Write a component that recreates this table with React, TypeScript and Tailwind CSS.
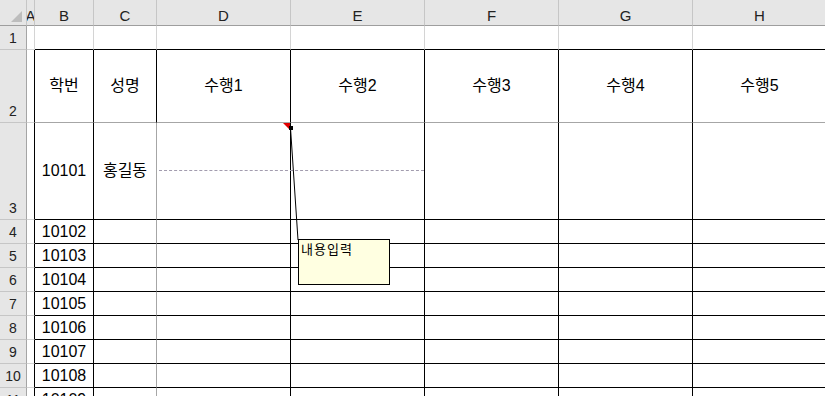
import clsx from 'clsx';

// 엑셀 시트 화면 (수행평가 입력표)
const cols = [
  { key: '#', w: 'w-[27px]' },
  { key: 'A', w: 'w-[8px]' },
  { key: 'B', w: 'w-[59px]' },
  { key: 'C', w: 'w-[63px]' },
  { key: 'D', w: 'w-[134px]' },
  { key: 'E', w: 'w-[134px]' },
  { key: 'F', w: 'w-[134px]' },
  { key: 'G', w: 'w-[134px]' },
  { key: 'H', w: 'w-[134px]' },
];

type Row = { n: number; h: string; data: Record<string, string> };

const rows: Row[] = [
  { n: 1, h: 'h-[24px]', data: {} },
  {
    n: 2,
    h: 'h-[73px]',
    data: { B: '학번', C: '성명', D: '수행1', E: '수행2', F: '수행3', G: '수행4', H: '수행5' },
  },
  { n: 3, h: 'h-[97px]', data: { B: '10101', C: '홍길동' } },
  ...[10102, 10103, 10104, 10105, 10106, 10107, 10108, 10109].map((id, i) => ({
    n: i + 4,
    h: 'h-[24px]',
    data: { B: String(id) },
  })),
];

const grid = 'border-[#d4d4d4]';

const cellBorders = (row: number, col: string) => {
  if (col === 'A') return row === 1 ? 'border-r-[#d4d4d4] border-b-[#d4d4d4]' : 'border-r-black border-b-[#d4d4d4]';
  if (row === 1) return 'border-r-[#d4d4d4] border-b-black';
  if (row === 2) return 'border-r-black border-b-[#a6a6a6]';
  if (col === 'C') return 'border-r-[#a6a6a6] border-b-black';
  return 'border-r-black border-b-black';
};

const ColumnHeader = () => (
  <div className="flex h-[26px]">
    {cols.map((c) =>
      c.key === '#' ? (
        <div
          key={c.key}
          className={clsx(c.w, 'shrink-0 border-r border-b border-r-[#c6c6c6] border-b-[#9e9e9e] bg-[#e6e6e6] relative')}
        >
          <svg className="absolute left-0 top-0" width="26" height="25">
            <polygon points="11,22 22,22 22,11" fill="#bdbdbd" />
          </svg>
        </div>
      ) : (
        <div
          key={c.key}
          className={clsx(
            c.w,
            'shrink-0 border-r border-b border-r-[#c6c6c6] border-b-[#9e9e9e] bg-[#e6e6e6] flex justify-center pt-[7px] text-[15px] leading-[18px] text-[#222] overflow-hidden'
          )}
        >
          {c.key}
        </div>
      )
    )}
  </div>
);

const SheetRow = ({ row }: { row: Row }) => (
  <div className={clsx('flex', row.h)}>
    {cols.map((c) =>
      c.key === '#' ? (
        <div
          key={c.key}
          className={clsx(
            c.w,
            'shrink-0 border-r border-b border-r-[#a5a5a5] border-b-[#c6c6c6] bg-[#e6e6e6] flex items-end justify-center pb-[2px] text-[14px] leading-[18px] text-[#222]'
          )}
        >
          {row.n}
        </div>
      ) : (
        <div
          key={c.key}
          className={clsx(
            c.w,
            grid,
            cellBorders(row.n, c.key),
            'shrink-0 border-r border-b bg-white flex items-center justify-center text-[16px] leading-[20px] text-black whitespace-nowrap'
          )}
        >
          {row.data[c.key] ?? ''}
        </div>
      )
    )}
  </div>
);

export default function App() {
  return (
    <div className="relative w-[825px] h-[396px] overflow-hidden bg-white font-['Liberation_Sans','Noto_Sans_CJK_KR',sans-serif]">
      <ColumnHeader />
      {rows.map((r) => (
        <SheetRow key={r.n} row={r} />
      ))}

      {/* 복사 영역 표시선 */}
      <div className="absolute left-[159px] top-[170px] w-[265px] border-t border-dashed border-[#a29cae]" />

      {/* 메모 표시 + 연결선 */}
      <svg className="absolute left-0 top-0 pointer-events-none" width="825" height="396">
        <polygon points="283,123 290,123 290,130" fill="#e00000" />
        <line x1="290.5" y1="128" x2="298" y2="240" stroke="#000" strokeWidth="1" />
        <rect x="289" y="126" width="4" height="4" fill="#000" />
      </svg>

      <div className="absolute left-[298px] top-[239px] w-[92px] h-[46px] border border-black bg-[#ffffe1] pl-[2px] pt-[1px] text-[13px] leading-[16px] text-black font-['Noto_Sans_CJK_KR',sans-serif] tracking-[1px]">
        내용입력
      </div>
    </div>
  );
}
